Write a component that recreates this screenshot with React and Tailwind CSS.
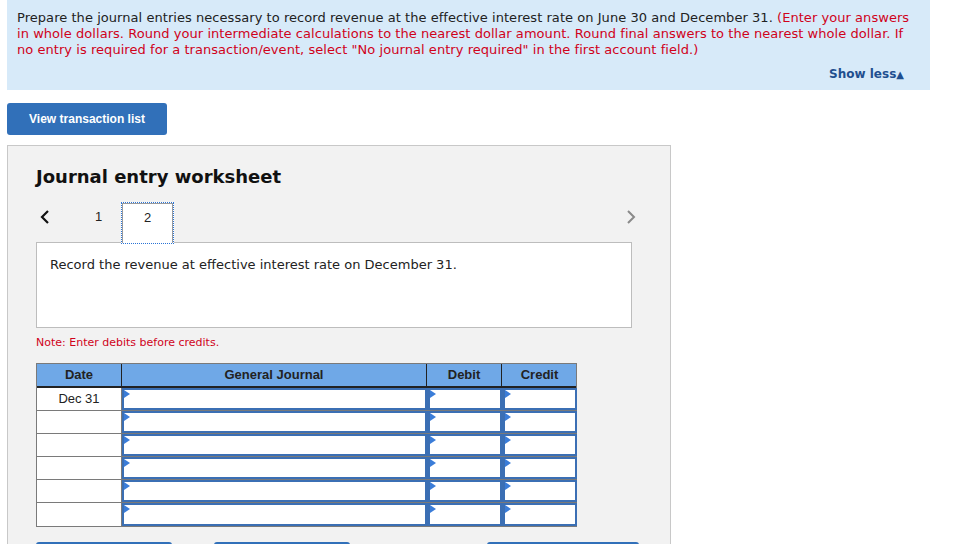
import React from "react";

const verdana = "font-['DejaVu_Sans',Verdana,sans-serif]";
const arial = "font-['Liberation_Sans',Arial,sans-serif]";

function InputCell({ className }) {
  return (
    <div className={"relative h-full border-2 border-[#3b6fb4] bg-white " + className}>
      <span className="absolute left-0 top-0 h-0 w-0 border-y-[4px] border-l-[6px] border-y-transparent border-l-[#3b7dd8]"></span>
    </div>
  );
}

function Row({ date }) {
  return (
    <div className="grid grid-cols-[85px_305px_75px_75px] h-[23px] border-b border-[#7a7a7a] last:border-b-0">
      <div className={"flex items-center justify-center border-r border-[#7a7a7a] bg-white text-[13px] text-[#222] " + arial}>
        {date}
      </div>
      <InputCell className="" />
      <InputCell className="border-l-[3px]" />
      <InputCell className="border-l-[3px]" />
    </div>
  );
}

function App() {
  const rows = ["Dec 31", "", "", "", "", ""];
  return (
    <div className={"min-h-[544px] w-[958px] overflow-hidden bg-white " + verdana}>
      <div className="ml-[7px] w-[923px] bg-[#d7eaf9] px-[10px] pt-[10px] pb-[7px]">
        <p className="text-[13px] leading-[16px] tracking-[0.05px] text-[#222]">
          Prepare the journal entries necessary to record revenue at the effective interest rate on June 30 and December 31.{" "}
          <span className="text-[#d0021b]">
            (Enter your answers
            <br />
            in whole dollars. Round your intermediate calculations to the nearest dollar amount. Round final answers to the nearest whole dollar. If
            <br />
            no entry is required for a transaction/event, select "No journal entry required" in the first account field.)
          </span>
        </p>
        <div className="mt-[8px] flex justify-end pr-[16px]">
          <span className="text-[12px] font-bold leading-[16px] text-[#1f4f8f]">
            Show less<span className="text-[10px]">▲</span>
          </span>
        </div>
      </div>

      <button className={"ml-[7px] mt-[13px] h-[32px] w-[160px] rounded-[3px] bg-[#3170b9] text-[12px] font-bold text-white " + arial}>
        View transaction list
      </button>

      <div className="ml-[7px] mt-[10px] w-[664px] border border-[#c8c8c8] bg-[#f2f2f2] pl-[28px] pr-[38px] pt-[19px] pb-[40px]">
        <h2 className="text-[18px] font-bold leading-[24px] text-[#111]">Journal entry worksheet</h2>

        <div className="mt-[13px] flex h-[41px] items-start">
          <div className="flex h-[29px] w-[40px] items-center pl-[3px]">
            <svg width="12" height="16" viewBox="0 0 12 16">
              <path d="M9 2 L3 8 L9 14" fill="none" stroke="#111" strokeWidth="2.2" />
            </svg>
          </div>
          <div className={"flex h-[29px] w-[45px] items-center justify-center text-[13px] text-[#222] " + arial}>1</div>
          <div className="relative z-10 h-[42px] w-[53px] border-[1.5px] border-dotted border-[#2a74d6] bg-white">
            <div className={"flex h-full justify-center border border-b-0 border-[#9a9a9a] pt-[6px] text-[13px] leading-[16px] text-[#222] " + arial}>
              2
            </div>
          </div>
          <div className="-mr-[5px] flex h-[29px] flex-1 items-center justify-end">
            <svg width="12" height="16" viewBox="0 0 12 16">
              <path d="M3 2 L9 8 L3 14" fill="none" stroke="#8a8a8a" strokeWidth="2" />
            </svg>
          </div>
        </div>

        <div className="-mt-[1px] h-[86px] w-[596px] border border-[#bdbdbd] bg-white px-[13px] pt-[13px]">
          <p className="text-[13px] leading-[18px] text-[#222]">Record the revenue at effective interest rate on December 31.</p>
        </div>

        <p className="mt-[8px] text-[11px] leading-[14px] text-[#d0021b]">Note: Enter debits before credits.</p>

        <div className="mt-[13px] w-[541px] border border-[#7a7a7a]">
          <div className={"grid h-[24px] grid-cols-[85px_305px_75px_75px] border-b-2 border-[#222] bg-[#6fa8e7] text-[13px] font-bold text-[#222] " + arial}>
            <div className="flex items-center justify-center border-r border-[#222]">Date</div>
            <div className="flex items-center justify-center border-r border-[#222]">General Journal</div>
            <div className="flex items-center justify-center border-r border-[#222]">Debit</div>
            <div className="flex items-center justify-center">Credit</div>
          </div>
          {rows.map((d, i) => (
            <Row key={i} date={d} />
          ))}
        </div>

        <div className="mt-[15px] flex">
          <div className="h-[10px] w-[136px] shrink-0 rounded-t-[3px] bg-[#3170b9]"></div>
          <div className="ml-[42px] h-[10px] w-[136px] shrink-0 rounded-t-[3px] bg-[#3170b9]"></div>
          <div className="ml-[137px] h-[10px] w-[152px] shrink-0 rounded-t-[3px] bg-[#3170b9]"></div>
        </div>
      </div>
    </div>
  );
}

export default App;
